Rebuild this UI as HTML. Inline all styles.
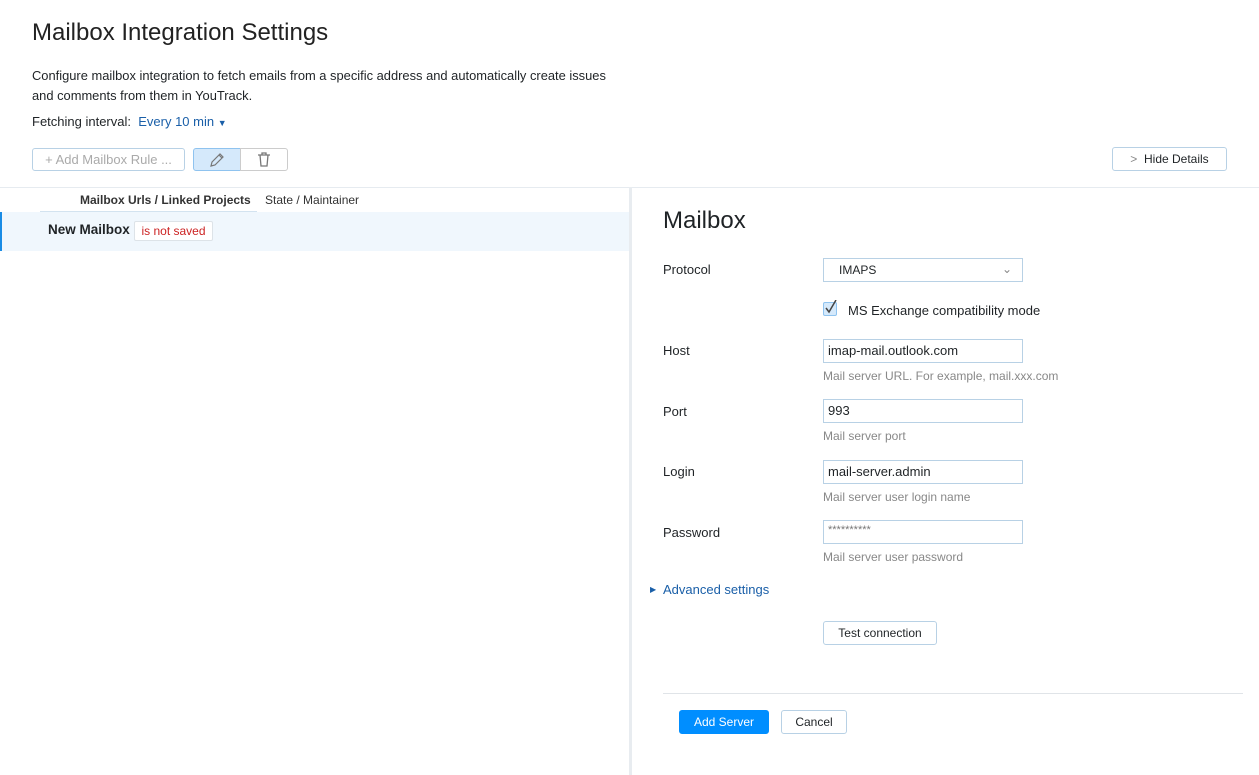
<!DOCTYPE html>
<html><head><meta charset="utf-8"><style>
*{box-sizing:border-box;margin:0;padding:0}
body{width:1259px;height:775px;background:#fff;font-family:"Liberation Sans",sans-serif;color:#1f2326;font-size:13px;position:relative;overflow:hidden}
.a{position:absolute;white-space:nowrap}
.btn{position:absolute;border:1px solid #b8d1e5;border-radius:3px;background:#fff;font-size:12px;color:#1f2326;text-align:center}
.lbl{position:absolute;left:663px;font-size:13px;color:#1f2326}
.inp{position:absolute;left:823px;width:200px;height:24px;border:1px solid #b8d1e5;padding:3px 4px;font-size:13px;color:#1f2326}
.hint{position:absolute;left:823px;font-size:12px;color:#888}
</style></head><body>
<div class="a" style="left:32px;top:19px;font-size:24px;color:#222">Mailbox Integration Settings</div>
<div class="a" style="left:32px;top:66px;font-size:12.9px;line-height:20px">Configure mailbox integration to fetch emails from a specific address and automatically create issues<br>and comments from them in YouTrack.</div>
<div class="a" style="left:32px;top:114px">Fetching interval: <span style="color:#1a5fa8">&nbsp;Every 10 min <span style="font-size:9px">▼</span></span></div>
<div class="btn" style="left:32px;top:148px;width:153px;height:23px;line-height:21px;color:#aaa;font-size:13px">+ Add Mailbox Rule ...</div>
<div class="btn" style="left:193px;top:148px;width:48px;height:23px;background:#d5e9fb;border-color:#8fc3ef;border-radius:3px 0 0 3px">
<svg width="18" height="18" viewBox="0 0 18 18" style="margin-top:2px"><path d="M3 15l1-4 8-8 3 3-8 8z M11 4l3 3" fill="none" stroke="#777" stroke-width="1.2"/></svg></div>
<div class="btn" style="left:240px;top:148px;width:48px;height:23px;border-color:#ccc;border-radius:0 3px 3px 0">
<svg width="16" height="18" viewBox="0 0 16 18" style="margin-top:2px"><path d="M2 4h12M6 4V2h4v2M4 4l1 11h6l1-11" fill="none" stroke="#777" stroke-width="1.3"/></svg></div>
<div class="btn" style="left:1112px;top:147px;width:115px;height:24px;line-height:22px"><span style="color:#888">&gt;</span>&nbsp; Hide Details</div>
<div class="a" style="left:0;top:187px;width:1259px;height:1px;background:#e6ebf0"></div>
<div class="a" style="left:80px;top:193px;font-size:12px;font-weight:bold;color:#333">Mailbox Urls / Linked Projects</div>
<div class="a" style="left:265px;top:193px;font-size:12px;color:#333">State / Maintainer</div>
<div class="a" style="left:40px;top:211px;width:217px;height:1px;background:#d3e3f0"></div>
<div class="a" style="left:0;top:212px;width:629px;height:39px;background:#f0f7fd;border-left:2px solid #1a8ce5"></div>
<div class="a" style="left:48px;top:222px;font-size:13.5px;font-weight:bold">New Mailbox</div>
<div class="a" style="left:134px;top:221px;width:79px;height:20px;border:1px solid #dde3e8;border-radius:2px;background:#fff;color:#c22;font-size:12px;text-align:center;line-height:18px">is not saved</div>
<div class="a" style="left:629px;top:187px;width:3px;height:588px;background:#e8ecf0"></div>
<div class="a" style="left:663px;top:207px;font-size:24px">Mailbox</div>
<div class="lbl" style="top:262px">Protocol</div>
<div class="inp" style="top:258px;height:24px;padding-left:15px;font-size:12px;line-height:16px">IMAPS<span style="position:absolute;right:10px;top:2px;color:#888">⌄</span></div>
<div class="a" style="left:823px;top:302px;width:14px;height:14px;border:1px solid #8fc3ef;background:#d5e9fb;border-radius:2px"><svg width="14" height="14" style="position:absolute;left:0;top:-3px"><path d="M2 8l3 4 7-12" fill="none" stroke="#444" stroke-width="1.5"/></svg></div>
<div class="a" style="left:848px;top:303px">MS Exchange compatibility mode</div>
<div class="lbl" style="top:343px">Host</div>
<div class="inp" style="top:339px">imap-mail.outlook.com</div>
<div class="hint" style="top:369px">Mail server URL. For example, mail.xxx.com</div>
<div class="lbl" style="top:404px">Port</div>
<div class="inp" style="top:399px">993</div>
<div class="hint" style="top:429px">Mail server port</div>
<div class="lbl" style="top:464px">Login</div>
<div class="inp" style="top:460px">mail-server.admin</div>
<div class="hint" style="top:490px">Mail server user login name</div>
<div class="lbl" style="top:525px">Password</div>
<div class="inp" style="top:520px;color:#777;font-size:11px">**********</div>
<div class="hint" style="top:550px">Mail server user password</div>
<div class="a" style="left:650px;top:585px;font-size:8px;color:#1a5fa8">▶</div>
<div class="a" style="left:663px;top:582px;color:#1a5fa8">Advanced settings</div>
<div class="btn" style="left:823px;top:621px;width:114px;height:24px;line-height:22px">Test connection</div>
<div class="a" style="left:663px;top:693px;width:580px;height:1px;background:#e0e4e8"></div>
<div class="btn" style="left:679px;top:710px;width:90px;height:24px;line-height:22px;background:#008eff;border-color:#008eff;color:#fff">Add Server</div>
<div class="btn" style="left:781px;top:710px;width:66px;height:24px;line-height:22px">Cancel</div>
</body></html>
